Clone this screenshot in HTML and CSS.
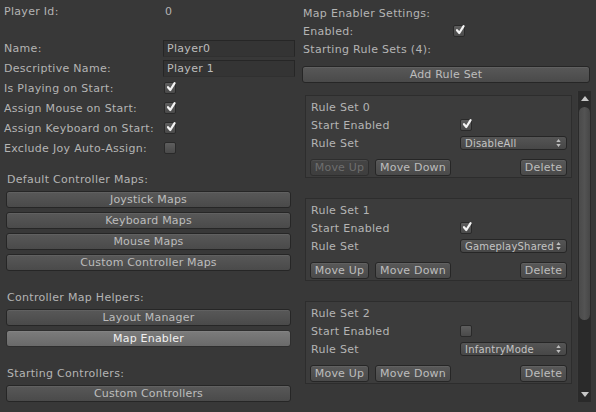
FILE: index.html
```html
<!DOCTYPE html>
<html>
<head>
<meta charset="utf-8">
<link rel="stylesheet" href="styles.css">
</head>
<body>
<div class="root">
  <div class="left">
    <div class="row first"><span class="lbl">Player Id:</span><span class="val">0</span></div>
    <div class="row spaced"><span class="lbl">Name:</span><span class="field">Player0</span></div>
    <div class="row"><span class="lbl">Descriptive Name:</span><span class="field">Player 1</span></div>
    <div class="row"><span class="lbl">Is Playing on Start:</span><span class="check on"><svg viewBox="0 0 12 12"><path d="M3 6.2 L5.3 9 L9.6 2.2" /></svg></span></div>
    <div class="row"><span class="lbl">Assign Mouse on Start:</span><span class="check on"><svg viewBox="0 0 12 12"><path d="M3 6.2 L5.3 9 L9.6 2.2" /></svg></span></div>
    <div class="row"><span class="lbl">Assign Keyboard on Start:</span><span class="check on"><svg viewBox="0 0 12 12"><path d="M3 6.2 L5.3 9 L9.6 2.2" /></svg></span></div>
    <div class="row"><span class="lbl">Exclude Joy Auto-Assign:</span><span class="check"></span></div>

    <div class="section first-section">Default Controller Maps:</div>
    <div class="btns">
      <div class="btn">Joystick Maps</div>
      <div class="btn">Keyboard Maps</div>
      <div class="btn">Mouse Maps</div>
      <div class="btn">Custom Controller Maps</div>
    </div>

    <div class="section">Controller Map Helpers:</div>
    <div class="btns">
      <div class="btn">Layout Manager</div>
      <div class="btn active">Map Enabler</div>
    </div>

    <div class="section">Starting Controllers:</div>
    <div class="btns">
      <div class="btn">Custom Controllers</div>
    </div>
  </div>

  <div class="right">
    <div class="rrow">Map Enabler Settings:</div>
    <div class="rrow"><span class="rlbl">Enabled:</span><span class="check on"><svg viewBox="0 0 12 12"><path d="M3 6.2 L5.3 9 L9.6 2.2" /></svg></span></div>
    <div class="rrow">Starting Rule Sets (4):</div>
    <div class="btn add">Add Rule Set</div>

    <div class="scroll">
      <div class="content">
        <div class="box">
          <div class="btitle">Rule Set 0</div>
          <div class="brow"><span class="blbl">Start Enabled</span><span class="check on"><svg viewBox="0 0 12 12"><path d="M3 6.2 L5.3 9 L9.6 2.2" /></svg></span></div>
          <div class="brow"><span class="blbl">Rule Set</span><span class="popup"><span class="ptext">DisableAll</span><svg class="parrow" viewBox="0 0 5 9"><path d="M0 3.5 L2.5 0 L5 3.5 Z M0 5.5 L2.5 9 L5 5.5 Z"/></svg></span></div>
          <div class="bbtns">
            <div class="btn sm up disabled">Move Up</div>
            <div class="btn sm down">Move Down</div>
            <div class="btn sm del">Delete</div>
          </div>
        </div>
        <div class="box">
          <div class="btitle">Rule Set 1</div>
          <div class="brow"><span class="blbl">Start Enabled</span><span class="check on"><svg viewBox="0 0 12 12"><path d="M3 6.2 L5.3 9 L9.6 2.2" /></svg></span></div>
          <div class="brow"><span class="blbl">Rule Set</span><span class="popup"><span class="ptext">GameplaySharedMaps</span><svg class="parrow" viewBox="0 0 5 9"><path d="M0 3.5 L2.5 0 L5 3.5 Z M0 5.5 L2.5 9 L5 5.5 Z"/></svg></span></div>
          <div class="bbtns">
            <div class="btn sm up">Move Up</div>
            <div class="btn sm down">Move Down</div>
            <div class="btn sm del">Delete</div>
          </div>
        </div>
        <div class="box">
          <div class="btitle">Rule Set 2</div>
          <div class="brow"><span class="blbl">Start Enabled</span><span class="check"></span></div>
          <div class="brow"><span class="blbl">Rule Set</span><span class="popup"><span class="ptext">InfantryMode</span><svg class="parrow" viewBox="0 0 5 9"><path d="M0 3.5 L2.5 0 L5 3.5 Z M0 5.5 L2.5 9 L5 5.5 Z"/></svg></span></div>
          <div class="bbtns">
            <div class="btn sm up">Move Up</div>
            <div class="btn sm down">Move Down</div>
            <div class="btn sm del">Delete</div>
          </div>
        </div>
      </div>
      <div class="sbar">
        <div class="arrow-up"></div>
        <div class="thumb"></div>
        <div class="arrow-down"></div>
      </div>
    </div>
  </div>
</div>
</body>
</html>
```
FILE: styles.css
```css
html, body {
  margin: 0;
  padding: 0;
  background: #383838;
}
body {
  width: 596px;
  height: 412px;
  overflow: hidden;
  font-family: "DejaVu Sans", sans-serif;
  font-size: 11px;
  letter-spacing: 0.3px;
  color: #b4b4b4;
}
.root {
  display: grid;
  grid-template-columns: 296px 300px;
  height: 412px;
}

/* left column */
.left {
  display: flex;
  flex-direction: column;
}
.row {
  display: flex;
  align-items: center;
  height: 20px;
  padding-left: 4px;
}
.row.first { margin-top: 1px; }
.row.spaced { margin-top: 17px; }
.lbl {
  width: 160px;
  flex: none;
  white-space: nowrap;
}
.val { padding-left: 1px; }
.field {
  box-sizing: border-box;
  width: 132px;
  height: 17px;
  margin-left: -1px;
  padding-left: 3px;
  background: #343434;
  border: 1px solid #262626;
  border-bottom-color: #303030;
  border-radius: 1px;
  display: flex;
  align-items: center;
  color: #bcbcbc;
}
.check {
  box-sizing: border-box;
  width: 12px;
  height: 12px;
  border-radius: 2px;
  border: 1px solid #2a2a2a;
  background: linear-gradient(#5e5e5e, #4a4a4a);
  display: flex;
  align-items: center;
  justify-content: center;
  position: relative;
}
.check svg {
  position: absolute;
  left: 0;
  top: -2px;
  width: 12px;
  height: 12px;
  overflow: visible;
}
.check svg path {
  fill: none;
  stroke: #f4f4f4;
  stroke-width: 2.2;
  stroke-linecap: round;
  stroke-linejoin: round;
}
.section {
  height: 18px;
  display: flex;
  align-items: center;
  padding-left: 7px;
  margin-top: 17px;
  margin-bottom: 3px;
}
.section.first-section { margin-top: 12px; }
.btns {
  display: flex;
  flex-direction: column;
  gap: 4px;
  padding: 0 5px 0 6px;
}
.btn {
  box-sizing: border-box;
  height: 17px;
  border: 1px solid #262626;
  border-radius: 3px;
  background: linear-gradient(#585858, #4a4a4a);
  box-shadow: inset 0 1px 0 rgba(255,255,255,0.06);
  color: #bdbdbd;
  display: flex;
  align-items: center;
  justify-content: center;
  white-space: nowrap;
  letter-spacing: 0.2px;
}
.btn.active {
  background: linear-gradient(#7c7c7c, #6a6a6a);
  color: #f0f0f0;
  border-color: #2e2e2e;
}

/* right column */
.right {
  display: flex;
  flex-direction: column;
  padding-top: 4px;
}
.rrow {
  height: 18px;
  display: flex;
  align-items: center;
  padding-left: 7px;
}
.rlbl { width: 150px; flex: none; }
.btn.add {
  margin: 8px 6px 0 6px;
  width: 288px;
}
.scroll {
  margin: 8px 0 0 6px;
  width: 289px;
  height: 311px;
  display: flex;
}
.content {
  width: 275px;
  height: 311px;
  overflow: hidden;
  padding: 4px 0 0 3px;
  box-sizing: border-box;
  display: flex;
  flex-direction: column;
  gap: 20px;
}
.box {
  box-sizing: border-box;
  width: 267px;
  flex: none;
  border: 1px solid #2d2d2d;
  background: #3c3c3c;
  padding: 2px 4px 1px 4px;
  display: flex;
  flex-direction: column;
}
.btitle {
  height: 18px;
  display: flex;
  align-items: center;
  padding-left: 1px;
}
.brow {
  height: 18px;
  display: flex;
  align-items: center;
  padding-left: 1px;
}
.blbl { width: 149px; flex: none; }
.popup {
  box-sizing: border-box;
  width: 107px;
  height: 14px;
  border: 1px solid #262626;
  border-radius: 3px;
  background: linear-gradient(#555555, #474747);
  display: flex;
  align-items: center;
  padding-left: 4px;
  font-size: 10px;
  color: #c4c4c4;
  overflow: hidden;
  position: relative;
}
.ptext {
  white-space: nowrap;
  overflow: hidden;
  width: 89px;
  flex: none;
  letter-spacing: 0.2px;
}
.parrow {
  position: absolute;
  right: 5px;
  top: 2px;
  width: 5px;
  height: 8px;
  fill: #bdbdbd;
}
.bbtns {
  display: flex;
  gap: 6px;
  margin-top: 7px;
}
.btn.sm { height: 17px; }
.btn.up { width: 59px; }
.btn.down { width: 76px; }
.btn.del { width: 47px; margin-left: auto; }
.btn.disabled {
  background: linear-gradient(#444444, #3e3e3e);
  color: #6e6e6e;
  border-color: #2e2e2e;
}

/* scrollbar */
.sbar {
  width: 14px;
  height: 311px;
  box-sizing: border-box;
  background: #2a2a2a;
  border-left: 1px solid #3a3a3a;
  display: flex;
  flex-direction: column;
  align-items: center;
}
.arrow-up {
  width: 0;
  height: 0;
  border-left: 4px solid transparent;
  border-right: 4px solid transparent;
  border-bottom: 5px solid #c8c8c8;
  margin-top: 5px;
}
.thumb {
  width: 11px;
  height: 213px;
  margin-top: 6px;
  border-radius: 6px;
  background: linear-gradient(90deg, #4a4a4a, #535353 50%, #474747);
}
.arrow-down {
  width: 0;
  height: 0;
  border-left: 4px solid transparent;
  border-right: 4px solid transparent;
  border-top: 5px solid #c8c8c8;
  margin-top: auto;
  margin-bottom: 5px;
}
```
